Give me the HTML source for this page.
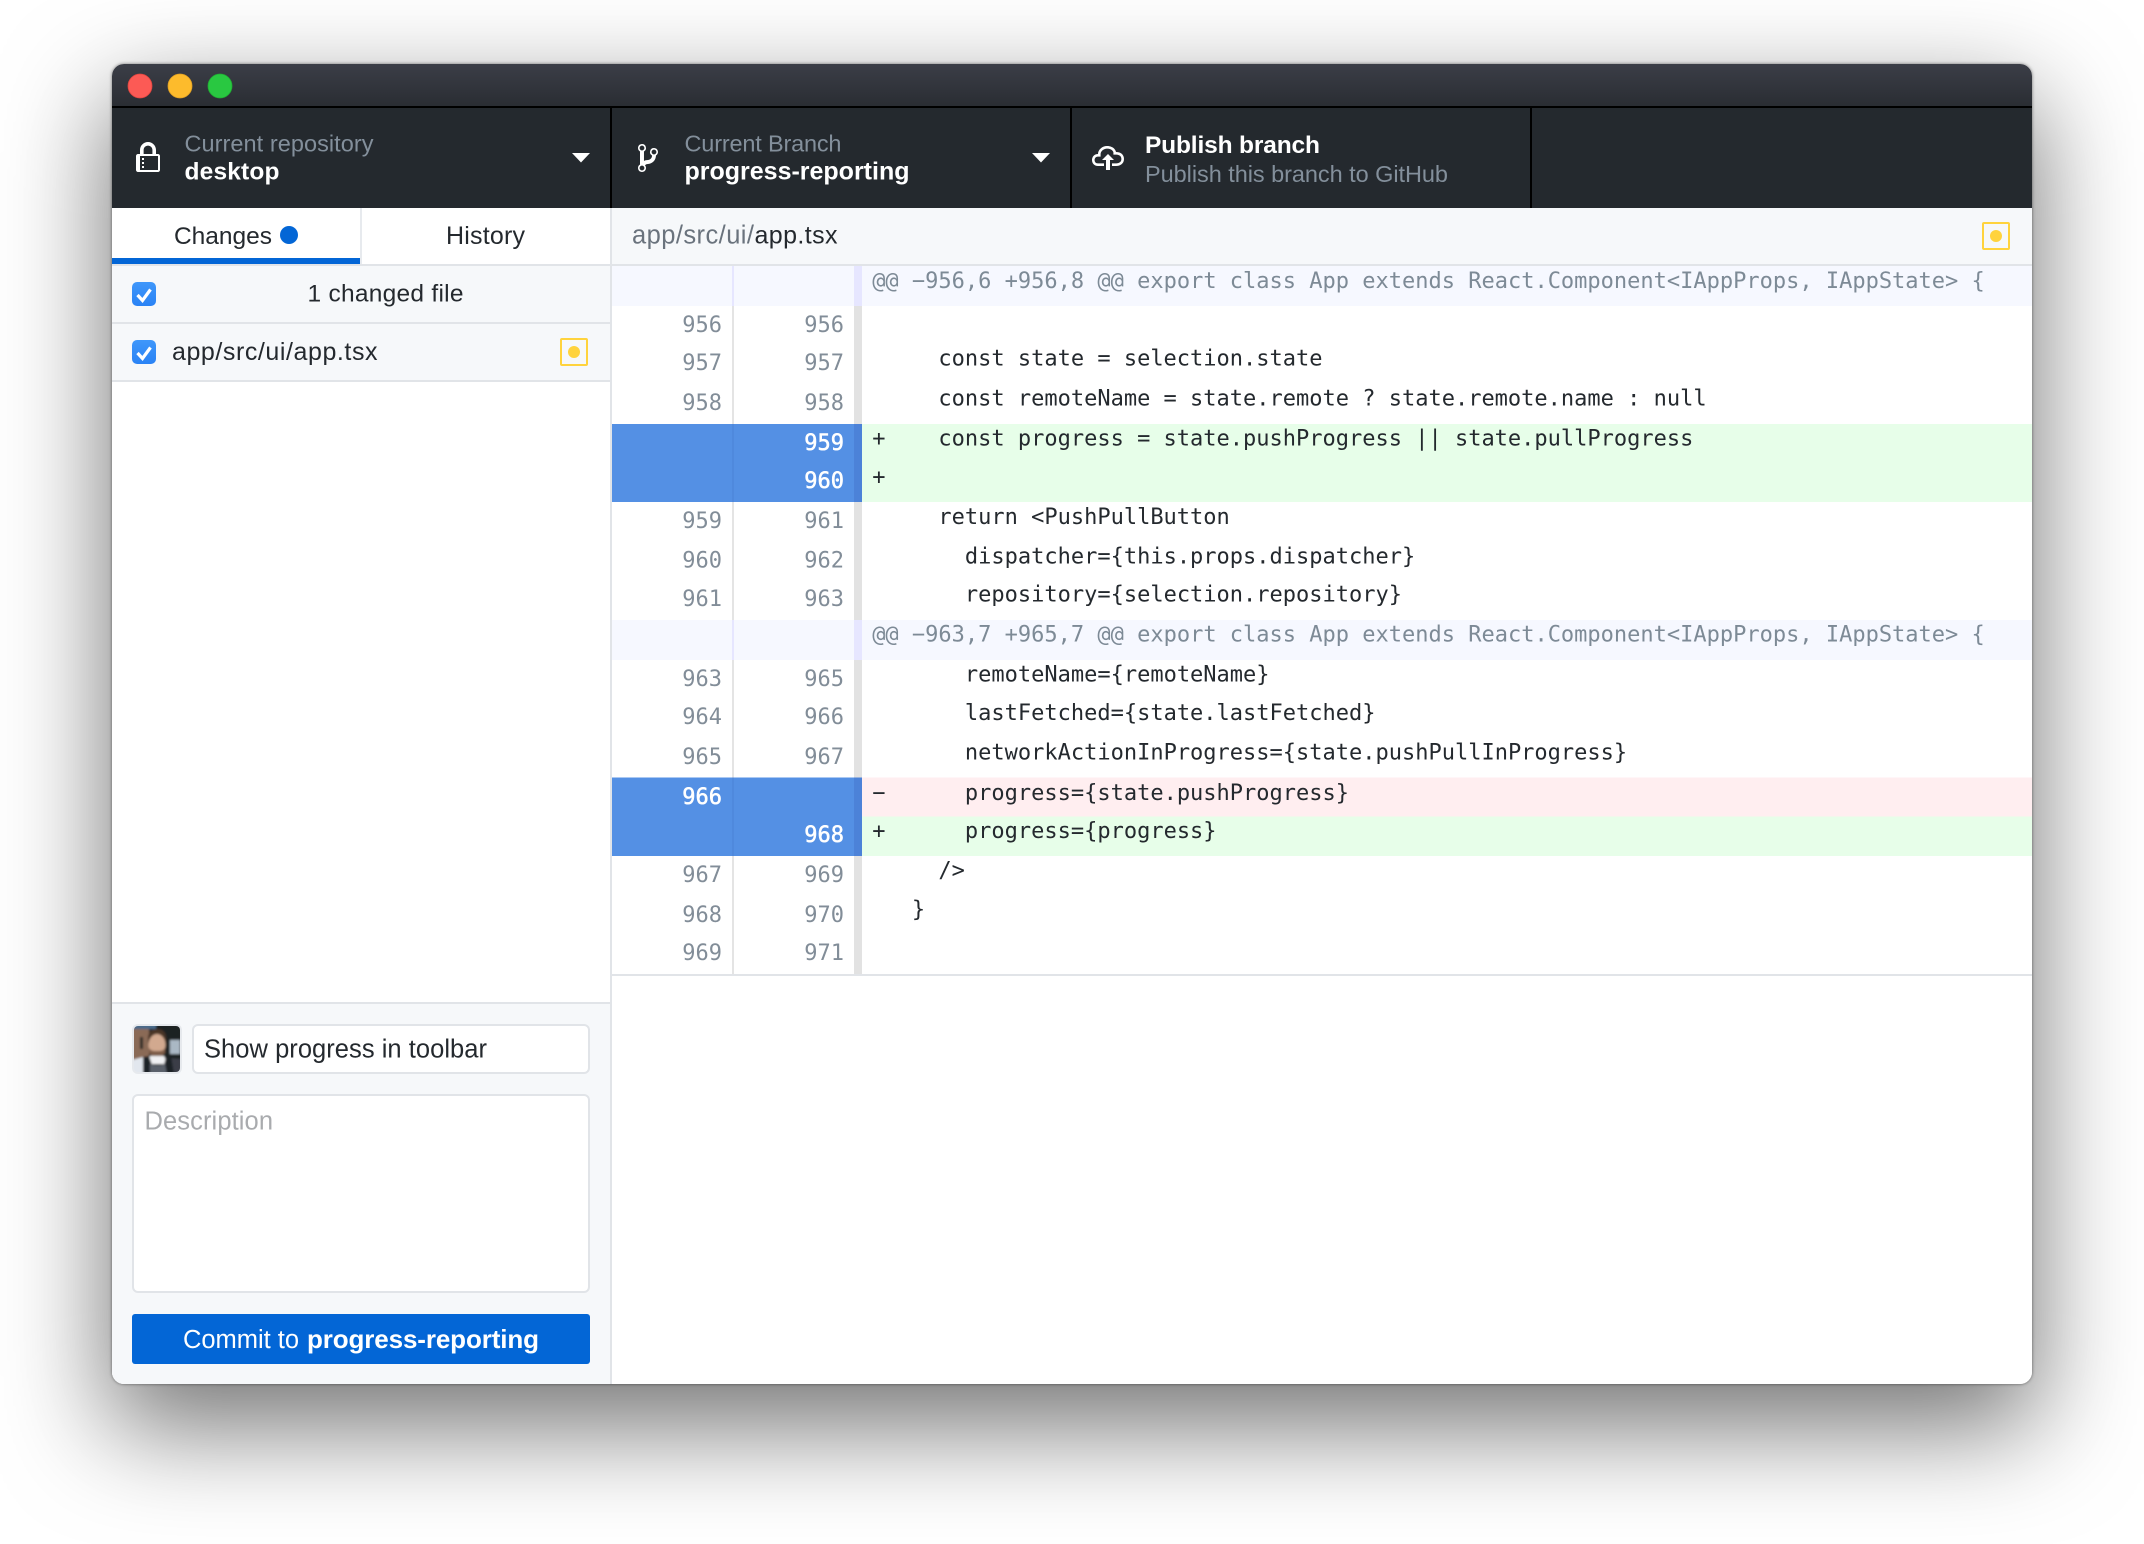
<!DOCTYPE html>
<html><head><meta charset="utf-8"><title>GitHub Desktop</title>
<style>
html,body{margin:0;padding:0;width:2144px;height:1544px;background:#fff;overflow:hidden}
#shadow{position:absolute;left:112px;top:64px;width:1920px;height:1320px;border-radius:12px;box-shadow:0 40px 104px 4px rgba(0,0,0,.54),0 0 3px rgba(0,0,0,.5)}
svg{position:absolute;left:0;top:0}
text{font-family:"Liberation Sans",sans-serif;white-space:pre}
.m text,text.m{font-family:"DejaVu Sans Mono",monospace;font-size:22px}
.n text{fill:#828d98;text-anchor:end}
.ns text{fill:#fff;stroke:#fff;stroke-width:.5;text-anchor:end}
.c text{fill:#24292e}
.h text{fill:#7d8a96}
</style></head><body>
<div id="shadow"></div>
<svg width="2144" height="1544" viewBox="0 0 2144 1544" xmlns="http://www.w3.org/2000/svg">
<defs>
<clipPath id="win"><rect x="112" y="64" width="1920" height="1320" rx="12"/></clipPath>
<clipPath id="av"><rect x="134" y="1026" width="46" height="46" rx="4"/></clipPath>
<linearGradient id="tb" x1="0" y1="0" x2="0" y2="1"><stop offset="0" stop-color="#3b3e47"/><stop offset="1" stop-color="#2a2d33"/></linearGradient>
<linearGradient id="cb" x1="0" y1="0" x2="0" y2="1"><stop offset="0" stop-color="#3f97fa"/><stop offset="1" stop-color="#2a83f5"/></linearGradient>
<filter id="bl" x="-10%" y="-10%" width="120%" height="120%"><feGaussianBlur stdDeviation="1.100"/></filter>
</defs>
<g clip-path="url(#win)">
<rect x="112" y="64" width="1920" height="1320" fill="#fff"/>
<rect x="112" y="64" width="1920" height="42" fill="url(#tb)"/>
<rect x="112" y="106" width="1920" height="2" fill="#000"/>
<rect x="112" y="108" width="1920" height="100" fill="#24292e"/>
<rect x="610" y="108" width="2" height="100" fill="#000"/>
<rect x="1070" y="108" width="2" height="100" fill="#000"/>
<rect x="1530" y="108" width="2" height="100" fill="#000"/>
<circle cx="140" cy="86" r="12" fill="#fc5a55" stroke="#e2453f" stroke-width=".8"/>
<circle cx="180" cy="86" r="12" fill="#fdbb2c" stroke="#e0a023" stroke-width=".8"/>
<circle cx="220" cy="86" r="12" fill="#29c841" stroke="#20ad33" stroke-width=".8"/>

<!-- toolbar icons -->
<path transform="translate(136 142) scale(2)" fill="#fff" d="M4 13H3v-1h1v1zm8-6v7c0 .55-.45 1-1 1H1c-.55 0-1-.45-1-1V7c0-.55.45-1 1-1h1V4c0-2.2 1.8-4 4-4s4 1.8 4 4v2h1c.55 0 1 .45 1 1zM3.8 6h4.41V4c0-1.22-.98-2.2-2.2-2.2-1.22 0-2.2.98-2.2 2.2v2H3.8zM11 7H2v7h9V7zM4 8H3v1h1V8zm0 2H3v1h1v-1z"/>
<path transform="translate(638 142) scale(2)" fill="#fff" d="M10 5c0-1.11-.89-2-2-2a1.993 1.993 0 0 0-1 3.72v.3c-.02.52-.23.98-.63 1.38-.4.4-.86.61-1.38.63-.83.02-1.48.16-2 .45V4.72a1.993 1.993 0 0 0-1-3.72C.88 1 0 1.89 0 3a2 2 0 0 0 1 1.72v6.56c-.59.35-1 .99-1 1.72 0 1.11.89 2 2 2 1.11 0 2-.89 2-2 0-.53-.2-1-.53-1.36.09-.06.48-.41.59-.47.25-.11.56-.17.94-.17 1.05-.05 1.95-.45 2.75-1.25S8.95 7.77 9 6.73h-.02C9.59 6.37 10 5.73 10 5zM2 1.8c.66 0 1.2.55 1.2 1.2 0 .65-.55 1.2-1.2 1.2C1.35 4.2.8 3.65.8 3c0-.65.55-1.2 1.2-1.2zm0 12.41c-.66 0-1.2-.55-1.2-1.2 0-.65.55-1.2 1.2-1.2.65 0 1.2.55 1.2 1.2 0 .65-.55 1.2-1.2 1.2zm6-8c-.66 0-1.2-.55-1.2-1.2 0-.65.55-1.2 1.2-1.2.65 0 1.2.55 1.2 1.2 0 .65-.55 1.2-1.2 1.2z"/>
<path transform="translate(1092 142) scale(2)" fill="#fff" d="M7 9H5l3-3 3 3H9v5H7V9zm5-4c0-.44-.91-3-4.5-3C5.08 2 3 3.92 3 6 1.02 6 0 7.52 0 9c0 1.53 1 3 3 3h3v-1.3H3c-1.62 0-1.7-1.42-1.7-1.7 0-.17.05-1.7 1.7-1.7h1.3V6c0-1.39 1.56-2.7 3.2-2.7 2.55 0 3.13 1.55 3.2 1.8v1.2H12c.81 0 2.7.22 2.7 2.2 0 2.09-2.25 2.2-2.7 2.2h-2V12h2c2.08 0 4-1.16 4-3.5C16 6.06 14.08 5 12 5z"/>
<path d="M572 153h18l-9 9.500z" fill="#fff"/>
<path d="M1032 153h18l-9 9.500z" fill="#fff"/>

<!-- toolbar text -->
<text x="184.500" y="151.500" font-size="23.500" fill="#838f9b" textLength="189">Current repository</text>
<text x="184.500" y="179.500" font-size="24.500" font-weight="bold" fill="#fff" textLength="95">desktop</text>
<text x="684.500" y="151.500" font-size="23.500" fill="#838f9b" textLength="157">Current Branch</text>
<text x="684.500" y="179.500" font-size="25" font-weight="bold" fill="#fff" textLength="225">progress-reporting</text>
<text x="1145" y="153" font-size="24.500" font-weight="bold" fill="#fff" textLength="175">Publish branch</text>
<text x="1145" y="182" font-size="23.500" fill="#838f9b" textLength="303">Publish this branch to GitHub</text>

<!-- sidebar -->
<rect x="112" y="208" width="498" height="56" fill="#fff"/>
<rect x="112" y="258" width="248" height="6" fill="#0366d6"/>
<rect x="360" y="208" width="2" height="56" fill="#e7eaee"/>
<rect x="112" y="264" width="498" height="2" fill="#e1e4e8"/>
<text x="174" y="244" font-size="24.500" fill="#24292e" textLength="98">Changes</text>
<circle cx="289" cy="235" r="9" fill="#0366d6"/>
<text x="446" y="244" font-size="25" fill="#24292e" textLength="79">History</text>
<rect x="112" y="266" width="498" height="56" fill="#f6f8fa"/>
<rect x="112" y="322" width="498" height="2" fill="#e1e4e8"/>
<rect x="112" y="324" width="498" height="56" fill="#f6f8fa"/>
<rect x="112" y="380" width="498" height="2" fill="#e1e4e8"/>
<rect x="132" y="282" width="24" height="24" rx="5" fill="url(#cb)"/>
<path d="M137.500 295l5 5.500 8-11" fill="none" stroke="#fff" stroke-width="3.200"/>
<rect x="132" y="340" width="24" height="24" rx="5" fill="url(#cb)"/>
<path d="M137.500 353l5 5.500 8-11" fill="none" stroke="#fff" stroke-width="3.200"/>
<text x="307.500" y="301.500" font-size="24.500" fill="#24292e" textLength="156">1 changed file</text>
<text x="172" y="360" font-size="25" fill="#24292e" textLength="205.500">app/src/ui/app.tsx</text>
<rect x="561" y="339" width="26" height="26" rx="1" fill="none" stroke="#ffd33d" stroke-width="2"/>
<circle cx="574" cy="352" r="6" fill="#ffd33d"/>
<rect x="610" y="208" width="2" height="1176" fill="#e1e4e8"/>

<!-- commit area -->
<rect x="112" y="1002" width="498" height="382" fill="#f6f8fa"/>
<rect x="112" y="1002" width="498" height="2" fill="#e1e4e8"/>
<rect x="132" y="1024" width="50" height="50" rx="6" fill="#e6e9ed"/>
<g clip-path="url(#av)"><g filter="url(#bl)">
<rect x="132" y="1024" width="50" height="50" fill="#1f2124"/>
<rect x="132" y="1024" width="17" height="38" fill="#8a6a56"/>
<rect x="132" y="1024" width="24" height="5" fill="#4a6a8a"/>
<rect x="140" y="1037" width="3" height="12" fill="#2c2a28"/>
<path d="M170 1040h10v14h-10z" fill="#aab8c4"/>
<path d="M148 1038c0-6 4-9 9-9s9 3 9 9v5h-18z" fill="#4a3428"/>
<ellipse cx="157" cy="1045" rx="8.500" ry="11" fill="#d2a98f"/>
<path d="M149 1048c2 3 4 3 8 3s6 0 8-3v5l-4 4h-8l-4-4z" fill="#7d5b46"/>
<path d="M150 1056h14l4 8h-22z" fill="#f0f1f3"/>
<path d="M132 1060l11-3v17h-11z" fill="#e2e7ee"/>
<path d="M168 1058l14 1v15h-10z" fill="#3a3e46"/>
<path d="M143 1057l6-1 3 9v9h-9zM171 1056l-5 1-2 8v9h10z" fill="#1d2026"/>
<path d="M150 1064c5 2 10 2 15 0l2 10h-17z" fill="#5a616b"/>
</g></g>
<rect x="193" y="1025" width="396" height="48" rx="5" fill="#fff" stroke="#e1e4e8" stroke-width="2"/>
<text x="204" y="1057.500" font-size="25.500" fill="#24292e" textLength="283">Show progress in toolbar</text>
<rect x="133" y="1095" width="456" height="197" rx="5" fill="#fff" stroke="#e1e4e8" stroke-width="2"/>
<text x="144.500" y="1129.500" font-size="25.500" fill="#a9abae" textLength="128.500">Description</text>
<rect x="132" y="1314" width="458" height="50" rx="3" fill="#0366d6"/>
<text x="183" y="1348" font-size="25.500" fill="#fff" textLength="116">Commit to</text>
<text x="307" y="1348" font-size="26" font-weight="bold" fill="#fff" textLength="232">progress-reporting</text>

<!-- diff header -->
<rect x="612" y="208" width="1420" height="56" fill="#f6f8fa"/>
<rect x="612" y="264" width="1420" height="2" fill="#e1e4e8"/>
<text x="632" y="243.500" font-size="25.500" fill="#6a737d" textLength="122">app/src/ui/</text>
<text x="754.500" y="243.500" font-size="25" fill="#24292e" textLength="83">app.tsx</text>
<rect x="1983" y="223" width="26" height="26" rx="1" fill="none" stroke="#ffd33d" stroke-width="2"/>
<circle cx="1996" cy="236" r="6" fill="#ffd33d"/>

<!-- diff gutters -->
<rect x="732" y="266" width="2" height="708" fill="#e4e4e4"/>
<rect x="854" y="266" width="8" height="708" fill="#e2e2e2"/>
<!-- hunk rows -->
<rect x="612" y="266" width="1420" height="40" fill="#f6f8ff"/>
<rect x="612" y="620" width="1420" height="40" fill="#f6f8ff"/>
<rect x="732" y="266" width="2" height="40" fill="#e6e6ff"/>
<rect x="854" y="266" width="8" height="40" fill="#e6e6ff"/>
<rect x="732" y="620" width="2" height="40" fill="#e6e6ff"/>
<rect x="854" y="620" width="8" height="40" fill="#e6e6ff"/>
<!-- add / del rows -->
<rect x="862" y="424" width="1170" height="78" fill="#e7fee9"/>
<rect x="862" y="777.500" width="1170" height="39" fill="#ffeef0"/>
<rect x="862" y="816.500" width="1170" height="39.500" fill="#e7fee9"/>
<rect x="612" y="424" width="250" height="78" fill="#5490e4"/>
<rect x="612" y="777.500" width="250" height="78.500" fill="#5490e4"/>
<rect x="732" y="424" width="2" height="78" fill="#4f89dd"/>
<rect x="854" y="424" width="8" height="78" fill="#4c82d8"/>
<rect x="732" y="777.500" width="2" height="78.500" fill="#4f89dd"/>
<rect x="854" y="777.500" width="8" height="78.500" fill="#4c82d8"/>
<rect x="612" y="974" width="1420" height="2" fill="#e1e4e8"/>

<!-- line numbers -->
<g class="m n">
<text x="722" y="332">956</text><text x="844" y="332">956</text>
<text x="722" y="370">957</text><text x="844" y="370">957</text>
<text x="722" y="410">958</text><text x="844" y="410">958</text>
<text x="722" y="528">959</text><text x="844" y="528">961</text>
<text x="722" y="567.500">960</text><text x="844" y="567.500">962</text>
<text x="722" y="606">961</text><text x="844" y="606">963</text>
<text x="722" y="686">963</text><text x="844" y="686">965</text>
<text x="722" y="724">964</text><text x="844" y="724">966</text>
<text x="722" y="764">965</text><text x="844" y="764">967</text>
<text x="722" y="882">967</text><text x="844" y="882">969</text>
<text x="722" y="922">968</text><text x="844" y="922">970</text>
<text x="722" y="960">969</text><text x="844" y="960">971</text>
</g>
<g class="m ns">
<text x="844" y="450">959</text>
<text x="844" y="488">960</text>
<text x="722" y="804">966</text>
<text x="844" y="842">968</text>
</g>

<!-- code -->
<g class="m h">
<text x="872.200" y="288">@@ −956,6 +956,8 @@ export class App extends React.Component&lt;IAppProps, IAppState&gt; {</text>
<text x="872.200" y="641.500">@@ −963,7 +965,7 @@ export class App extends React.Component&lt;IAppProps, IAppState&gt; {</text>
</g>
<g class="m c">
<text x="938.400" y="365.500">const state = selection.state</text>
<text x="938.400" y="405.500">const remoteName = state.remote ? state.remote.name : null</text>
<text x="872.200" y="445.500">+</text>
<text x="938.400" y="445.500">const progress = state.pushProgress || state.pullProgress</text>
<text x="872.200" y="484">+</text>
<text x="938.400" y="524">return &lt;PushPullButton</text>
<text x="964.900" y="563.500">dispatcher={this.props.dispatcher}</text>
<text x="964.900" y="601.500">repository={selection.repository}</text>
<text x="964.900" y="681.500">remoteName={remoteName}</text>
<text x="964.900" y="720">lastFetched={state.lastFetched}</text>
<text x="964.900" y="759.500">networkActionInProgress={state.pushPullInProgress}</text>
<text x="872.200" y="800">−</text>
<text x="964.900" y="800">progress={state.pushProgress}</text>
<text x="872.200" y="838">+</text>
<text x="964.900" y="838">progress={progress}</text>
<text x="938.400" y="877.500">/&gt;</text>
<text x="911.900" y="916.500">}</text>
</g>
</g>
</svg>
</body></html>
